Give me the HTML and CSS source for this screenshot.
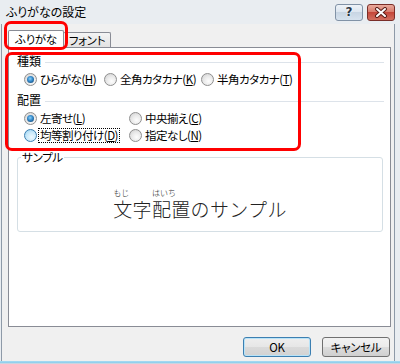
FILE: index.html
```html
<!DOCTYPE html>
<html lang="ja">
<head>
<meta charset="utf-8">
<title>ふりがなの設定</title>
<link rel="stylesheet" href="styles.css">
</head>
<body>
<div class="window">
  <div class="titlebar">
    <span class="title">ふりがなの設定</span>
    <div class="caption">
      <span class="cap help">?</span>
      <span class="cap close">
        <svg width="14" height="11" viewBox="0 0 14 11">
          <path d="M3 2 L11 9 M11 2 L3 9" stroke="#5a1d17" stroke-width="4" stroke-linecap="round"/>
          <path d="M3 2 L11 9 M11 2 L3 9" stroke="#ffffff" stroke-width="2" stroke-linecap="round"/>
        </svg>
      </span>
    </div>
  </div>
  <div class="client">
    <div class="tabs">
      <div class="tab active">ふりがな</div>
      <div class="tab">フォント</div>
    </div>
    <div class="panel">
      <div class="section-head"><span>種類</span><i class="rule"></i></div>
      <div class="opts-type">
        <div class="opt"><span class="radio checked"></span><span class="txt">ひらがな(<u>H</u>)</span></div>
        <div class="opt"><span class="radio"></span><span class="txt">全角カタカナ(<u>K</u>)</span></div>
        <div class="opt"><span class="radio"></span><span class="txt">半角カタカナ(<u>T</u>)</span></div>
      </div>
      <div class="section-head head2"><span>配置</span><i class="rule"></i></div>
      <div class="opts-align">
        <div class="opt"><span class="radio checked"></span><span class="txt">左寄せ(<u>L</u>)</span></div>
        <div class="opt"><span class="radio"></span><span class="txt">中央揃え(<u>C</u>)</span></div>
        <div class="opt"><span class="radio hover"></span><span class="txt focus">均等割り付け(<u>D</u>)</span></div>
        <div class="opt"><span class="radio"></span><span class="txt">指定なし(<u>N</u>)</span></div>
      </div>
      <fieldset class="sample">
        <legend>サンプル</legend>
        <div class="sample-text">
          <span class="rb"><span class="rt">もじ</span><span class="base">文字</span></span><span class="rb"><span class="rt">はいち</span><span class="base">配置</span></span><span class="base">のサンプル</span>
        </div>
      </fieldset>
    </div>
    <div class="buttons">
      <button class="btn default">OK</button>
      <button class="btn">キャンセル</button>
    </div>
  </div>
  <div class="frame-bottom"></div>
  <div class="hl hl-tab"></div>
  <div class="hl hl-group"></div>
</div>
</body>
</html>
```
FILE: styles.css
```css
html, body {
  margin: 0;
  padding: 0;
}
body {
  font-family: "Noto Sans CJK JP", "Noto Sans", sans-serif;
  font-size: 12px;
  color: #000;
  background: #e9edf1;
}
.window {
  position: relative;
  width: 400px;
  height: 364px;
  display: flex;
  flex-direction: column;
  background: #e9edf1;
  overflow: hidden;
}
.titlebar {
  height: 24px;
  flex: none;
  display: flex;
  align-items: flex-start;
  padding-left: 6px;
}
.title {
  line-height: 24px;
  font-feature-settings: "palt";
}
.caption {
  margin-left: auto;
  margin-right: 5px;
  margin-top: 4px;
  display: flex;
  gap: 4px;
}
.cap {
  width: 28px;
  height: 17px;
  box-sizing: border-box;
  border-radius: 3px;
  display: flex;
  align-items: center;
  justify-content: center;
}
.help {
  border: 1px solid #8192a6;
  background: linear-gradient(#eef3f8, #dde6f0 45%, #c8d5e3 50%, #d6e2ee);
  color: #2a3644;
  font: bold 12px "DejaVu Sans", sans-serif;
  line-height: 15px;
  text-shadow: 0 0 1px #fff, 0 0 2px #fff;
}
.close {
  border: 1px solid #7a2e28;
  background: linear-gradient(#e9a99c, #d97d6e 45%, #c5473a 50%, #d27060);
}
.client {
  flex: 1;
  margin: 0 5px 0 1px;
  border-left: 1px solid #8e9aa8;
  border-right: 1px solid #8e9aa8;
  background: #f0f0f0;
  padding: 6px 3px 4px 6px;
  display: flex;
  flex-direction: column;
}
.tabs {
  height: 17px;
  flex: none;
  display: flex;
  align-items: flex-end;
  position: relative;
  z-index: 1;
}
.tab {
  box-sizing: border-box;
  height: 15px;
  width: 48px;
  margin-left: -1px;
  border: 1px solid #898c95;
  border-bottom: none;
  border-radius: 2px 2px 0 0;
  background: linear-gradient(#f4f4f4, #e2e2e2);
  text-align: center;
  font-size: 11.5px;
  letter-spacing: -0.3px;
  line-height: 14px;
  font-feature-settings: "palt";
}
.tab.active {
  height: 18px;
  width: 56px;
  margin-left: 0;
  margin-bottom: -1px;
  background: #fff;
  line-height: 17px;
  position: relative;
  z-index: 2;
}
.panel {
  height: 280px;
  flex: none;
  box-sizing: border-box;
  border: 1px solid #898c95;
  background: #fff;
  padding: 0 6px 0 8px;
  display: flex;
  flex-direction: column;
}
.section-head {
  display: flex;
  align-items: center;
  height: 14px;
  line-height: 14px;
  margin-top: 6px;
}
.rule {
  flex: 1;
  height: 1px;
  background: #dde3ea;
  margin-left: 4px;
  margin-top: 2px;
}
.opts-type {
  display: grid;
  grid-template-columns: 80px 97px auto;
  height: 16px;
  margin: 3px 0 0 7px;
}
.opts-align {
  display: grid;
  grid-template-columns: 105px auto;
  grid-auto-rows: 16px;
  row-gap: 1px;
  margin: 3px 0 0 7px;
}
.opt {
  display: flex;
  align-items: center;
  height: 16px;
  white-space: nowrap;
  font-size: 11.5px;
  letter-spacing: -0.5px;
  font-feature-settings: "palt";
}
.radio {
  position: relative;
  flex: none;
  width: 13px;
  height: 13px;
  box-sizing: border-box;
  border-radius: 50%;
  border: 1px solid #8f8f8f;
  background: radial-gradient(circle at 60% 65%, #fdfdfd 0, #ebebeb 45%, #cdcdcd 100%);
}
.radio.checked::after {
  content: "";
  position: absolute;
  left: 2px;
  top: 2px;
  width: 7px;
  height: 7px;
  border-radius: 50%;
  background: radial-gradient(circle at 45% 40%, #8fd3f7 0, #3a8fd0 40%, #1a5a8e 75%, #0f3f68 100%);
}
.radio.hover {
  border-color: #3c7fb1;
  background: radial-gradient(circle at 60% 65%, #eef8fe 0, #c9e9fa 50%, #92cef0 100%);
}
.txt {
  margin-left: 1px;
  padding: 0 1px;
  border: 1px dotted transparent;
  line-height: 13px;
}
.txt.focus {
  border-color: #000;
}
.sample {
  margin: 8px 1px 0 0;
  padding: 0 0 12px;
  border: 1px solid #d5dfe5;
  border-radius: 3px;
  min-width: 0;
}
.sample legend {
  margin-left: 3px;
  padding: 0 1px;
  font-size: 11.5px;
  letter-spacing: -0.3px;
  line-height: 12px;
  font-feature-settings: "palt";
}
.sample-text {
  display: flex;
  justify-content: center;
  align-items: flex-end;
  padding-top: 25px;
  font-size: 19px;
  font-weight: 300;
  line-height: 20px;
  letter-spacing: 0.35px;
  color: #222;
}
.rb {
  display: flex;
  flex-direction: column;
  align-items: flex-start;
}
.rt {
  font-size: 8px;
  line-height: 9px;
  letter-spacing: 0;
  margin-bottom: 2px;
}
.base {
  line-height: 20px;
}
.buttons {
  display: flex;
  justify-content: flex-end;
  gap: 11px;
  height: 20px;
  margin-top: 10px;
  padding-right: 1px;
  flex: none;
}
.btn {
  width: 68px;
  height: 20px;
  box-sizing: border-box;
  padding: 0;
  border: 1px solid #707070;
  border-radius: 3px;
  background: linear-gradient(#f2f2f2 0, #ebebeb 50%, #dddddd 50%, #cfcfcf 100%);
  font-family: "Noto Sans CJK JP", "Noto Sans", sans-serif;
  font-size: 11.5px;
  letter-spacing: -0.3px;
  line-height: 18px;
  color: #000;
  font-feature-settings: "palt";
}
.btn.default {
  border-color: #3c7fb1;
  box-shadow: inset 0 0 0 1px #b8e3f8;
  background: linear-gradient(#eeeeee 0, #e6e6e6 50%, #dadada 50%, #d2d2d2 100%);
}
.frame-bottom {
  height: 3px;
  flex: none;
  background: linear-gradient(#a9dcf3 0, #8ccbea 66%, #c9d5e1 66%);
}
.hl {
  position: absolute;
  box-sizing: border-box;
  border: 3px solid #ff0000;
  border-radius: 7px;
  pointer-events: none;
  z-index: 5;
}
.hl-tab {
  left: 4px;
  top: 21px;
  width: 64px;
  height: 29px;
}
.hl-group {
  left: 5px;
  top: 52px;
  width: 296px;
  height: 99px;
}
```
